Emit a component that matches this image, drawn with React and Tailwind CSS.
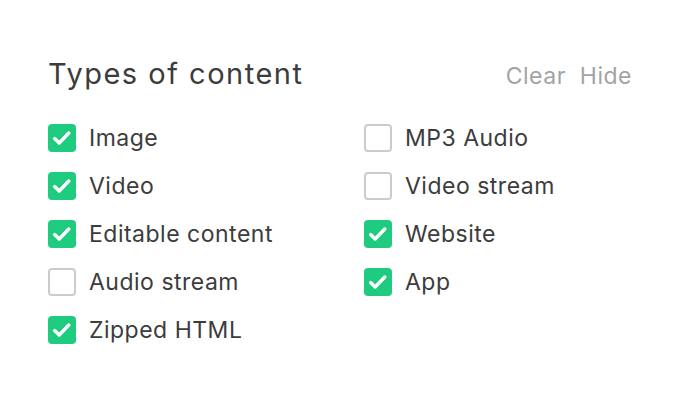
import React, { useState } from 'react';

const left = [
  ['Image', true],
  ['Video', true],
  ['Editable content', true],
  ['Audio stream', false],
  ['Zipped HTML', true],
];

const right = [
  ['MP3 Audio', false],
  ['Video stream', false],
  ['Website', true],
  ['App', true],
];

function Box({ label, initial }) {
  const [on, setOn] = useState(initial);
  return (
    <label className="flex items-center h-[48px] cursor-pointer" onClick={() => setOn(!on)}>
      {on ? (
        <span className="w-[28px] h-[28px] rounded-[4px] bg-[#1fcb7f] flex items-center justify-center shrink-0">
          <svg width="22" height="22" viewBox="0 0 22 22" fill="none">
            <path d="M3.6 11.6l4.6 4.4 9.6-10" stroke="white" strokeWidth="3.4" strokeLinecap="round" strokeLinejoin="round" />
          </svg>
        </span>
      ) : (
        <span className="w-[28px] h-[28px] rounded-[4px] border-2 border-[#cbcbcb] bg-white shrink-0" />
      )}
      <span className="ml-[13px] text-[23px] tracking-[0.5px] text-[#3c3c3c]">{label}</span>
    </label>
  );
}

export default function App() {
  return (
    <div className="w-[680px] h-[396px] bg-white" style={{ fontFamily: 'Inter, sans-serif' }}>
      <div className="pl-[48px] pr-[48px] pt-[52px]">
        <div className="flex items-baseline justify-between">
          <h1 className="text-[29px] tracking-[1.5px] text-[#3c3c3c] leading-[44px]">Types of content</h1>
          <div className="flex gap-[14px] text-[23px] tracking-[0.5px] text-[#a3a3a3]">
            <span>Clear</span>
            <span>Hide</span>
          </div>
        </div>
        <div className="flex mt-[18px]">
          <div className="w-[316px] flex flex-col">
            {left.map(([l, c]) => <Box key={l} label={l} initial={c} />)}
          </div>
          <div className="flex flex-col">
            {right.map(([l, c]) => <Box key={l} label={l} initial={c} />)}
          </div>
        </div>
      </div>
    </div>
  );
}
